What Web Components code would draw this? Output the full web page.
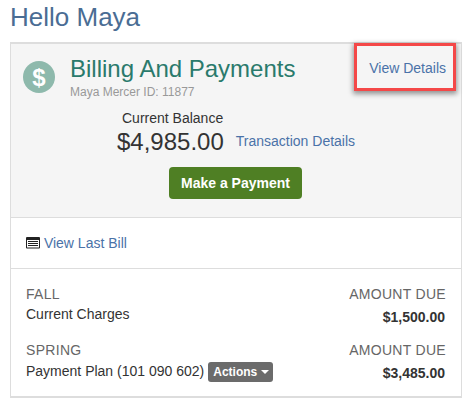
<!DOCTYPE html>
<html><head><meta charset="utf-8">
<style>
html,body{margin:0;padding:0;background:#fff;font-family:"Liberation Sans",Arial,sans-serif;color:#333;font-size:14px;line-height:20px;overflow:hidden}
body{padding:0 11px 0 10px;width:452px}
</style></head><body>
<hello-page></hello-page>
<script>
function def(name,html){customElements.define(name,class extends HTMLElement{constructor(){super();this.attachShadow({mode:'open'}).innerHTML=html}})}
def('callout-box',`<style>:host{position:absolute;left:343px;top:-1px;width:96px;height:42px;border:3px solid #f44848;box-shadow:0 2px 5px 1px rgba(0,0,0,.4);pointer-events:none}</style>`);
def('dollar-icon',`<style>:host{display:block;width:32px;height:32px;flex:none}svg{display:block}text{font:bold 24px "Liberation Sans",sans-serif;fill:#fff}</style><svg width="32" height="32" viewBox="0 0 32 32"><circle cx="16" cy="16" r="16" fill="#8eb9ac"/><text x="16" y="24.500" text-anchor="middle">$</text></svg>`);
def('bill-icon',`<style>:host{display:inline-block;width:14px;height:12px;vertical-align:-1px}svg{display:block}</style><svg width="14" height="12" viewBox="0 0 14 12"><path fill="#222" d="M0 1Q0 0 1 0H13Q14 0 14 1V10.500Q14 11.500 13 11.500H1Q0 11.500 0 10.500Z"/><path fill="#fff" d="M1 3H13V10.500H1Z"/><path fill="#222" d="M2 4H12V5H2ZM2 6H12V7H2ZM2 8H12V9H2Z"/></svg>`);
def('billing-header',`<style>
:host{display:block;background:#f5f5f5;border-bottom:1px solid #ddd;position:relative;height:173px;box-sizing:content-box}
.top{display:flex;gap:15px;padding:17px 0 0 12px}
h2{margin:-5px 0 0;font:400 24px/26px "Liberation Sans",sans-serif;color:#2a7a6c}
.sub{font-size:12px;line-height:14px;color:#999;margin-top:3px}
a{color:#4a72a8;text-decoration:none}
.view{position:absolute;right:15px;top:14px;font-size:14px}
.bal{display:flex;flex-direction:column;margin:10px 0 0 106px}
.label{font-size:14px;line-height:19px;color:#333;margin-left:5px}
.row{display:flex;align-items:center;gap:12px}
.amt{font-size:24px;line-height:28px;color:#333}
.row a{margin-top:-2px}
.btnrow{display:flex;justify-content:center;margin-top:11px;padding-right:1px}
button{all:unset;background:#4f7f24;color:#fff;font:bold 14px/20px "Liberation Sans",sans-serif;padding:6px 12px;border-radius:4px;width:109px;text-align:center}
</style>
<div class="top"><dollar-icon></dollar-icon><div><h2>Billing And Payments</h2><div class="sub">Maya Mercer ID: 11877</div></div></div>
<a class="view">View Details</a>
<div class="bal"><div class="label">Current Balance</div><div class="row"><span class="amt">$4,985.00</span><a>Transaction Details</a></div></div>
<div class="btnrow"><button>Make a Payment</button></div>`);
def('bill-link',`<style>:host{display:block;height:50px;border-bottom:1px solid #ddd;box-sizing:content-box;padding-left:15px}
div{padding-top:15px;line-height:20px;color:#4a72a8}</style><div><bill-icon></bill-icon> View Last Bill</div>`);
def('charge-row',`<style>:host{display:flex;justify-content:space-between;height:56px}
.l,.r{display:flex;flex-direction:column}
.r{align-items:flex-end}
.term{color:#666;letter-spacing:.3px;line-height:20px}
.desc{line-height:20px;display:flex;align-items:center;gap:4px;color:#333}
.amt{font-weight:bold;line-height:20px;margin:3px 1px 0 0;font-size:14px}
</style><div class="l"><div class="term"><slot name="term"></slot></div><div class="desc"><slot name="desc"></slot></div></div>
<div class="r"><div class="term">AMOUNT DUE</div><div class="amt"><slot name="amt"></slot></div></div>`);
def('actions-pill',`<style>:host{display:inline-flex;align-items:center;gap:3px;background:#6b6b6b;color:#fff;font:bold 12px/18px "Liberation Sans",sans-serif;padding:1px 4px 1px 5px;border-radius:3px;margin-top:2px}
i{display:block;width:0;height:0;border:4px solid transparent;border-top-color:#fff;border-bottom:0;margin-left:1px}</style><slot></slot><i></i>`);
def('billing-card',`<style>:host{display:block;border:1px solid #ddd;border-width:2px 1px 2px 1px;position:relative;box-sizing:border-box;height:356px}
.list{padding:15px 15px 0 15px}</style>
<billing-header></billing-header><bill-link></bill-link>
<callout-box></callout-box>
<div class="list">
<charge-row><span slot="term">FALL</span><span slot="desc">Current Charges</span><span slot="amt">$1,500.00</span></charge-row>
<charge-row><span slot="term">SPRING</span><span slot="desc">Payment Plan (101 090 602)</span><actions-pill slot="desc">Actions</actions-pill><span slot="amt">$3,485.00</span></charge-row>
</div>`);
def('hello-page',`<style>:host{display:block}
h1{margin:0;padding-top:3px;height:37px;box-sizing:border-box;font:400 26px/28px "Liberation Sans",sans-serif;color:#4a6d94}
</style><h1>Hello Maya</h1><div style="height:5px"></div><billing-card></billing-card>`);
</script></body></html>
